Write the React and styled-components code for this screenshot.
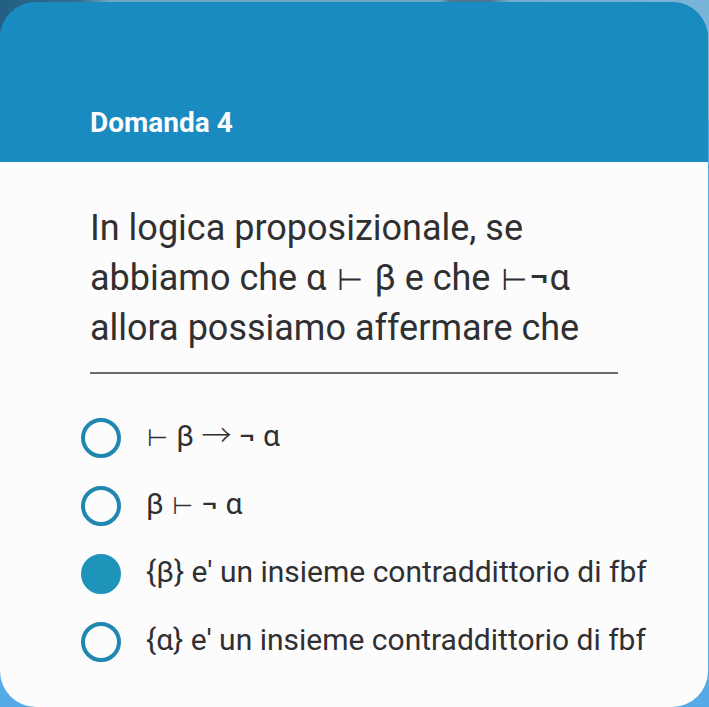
import React, { useState } from "react";
import styled, { createGlobalStyle } from "styled-components";

const Global = createGlobalStyle`
  * { box-sizing: border-box; }
  body {
    margin: 0;
    background:
      linear-gradient(to right, #235f82 0, #2f7093 80px, #70a9c6 110px, #70a9c6 440px, #4f7490 450px, #4f7490 490px, #70add0 510px, #78b5d8 100%) top / 100% 120px no-repeat,
      #55abe5;
    color: #303033;
    font-family: Roboto, "Noto Sans", "DejaVu Sans", sans-serif;
  }
`;

const Card = styled.main`
  display: flex;
  flex-direction: column;
  min-height: calc(100vh - 2px);
  margin: 2px 1px 0 0;
  border-radius: 36px;
  overflow: hidden;
  background: linear-gradient(#198bc1 80px, #fcfcfc 80px);
`;

const Header = styled.header`
  display: flex;
  align-items: flex-end;
  min-height: 160px;
  padding: 0 90px 22px;
  background: #198bc1;
  color: #fcfcfc;
`;

const Title = styled.h1`
  margin: 0;
  font-size: 28px;
  line-height: 34px;
  font-weight: 700;
`;

const Quiz = styled.form`
  padding: 41px 50px 28px 81px;
`;

const Question = styled.h2`
  margin: 0 40px 0 9px;
  padding-bottom: 19px;
  border-bottom: 2px solid #6c6c6e;
  font-size: 36px;
  line-height: 50px;
  font-weight: 400;
`;

const Line = styled.span`
  display: block;
  white-space: nowrap;
`;

const Options = styled.div`
  display: grid;
  gap: 28px;
  margin-top: 44px;
`;

const Option = styled.label`
  display: flex;
  align-items: flex-start;
  gap: 25px;
  height: 40px;
  font-size: 30px;
  line-height: 36px;
  white-space: nowrap;
`;

const Radio = styled.input`
  appearance: none;
  flex: none;
  width: 40px;
  height: 40px;
  margin: 0;
  border: 4px solid #2087b0;
  border-radius: 50%;
  &:checked { border-color: #1e94bb; background: #1e94bb; }
`;

const Turnstile = styled.span`
  padding: 0 ${({ $large }) => ($large ? "2px" : "1px")};
  font-size: ${({ $large }) => ($large ? "30px" : "24px")};
  line-height: 1;
`;

const Arrow = styled.span`
  font-family: "Noto Sans CJK JP", sans-serif;
  font-weight: 300;
  line-height: 1;
`;

const answers = [
  { id: "a", text: <><Turnstile>⊢</Turnstile> β <Arrow>→</Arrow> ¬ α</> },
  { id: "b", text: <>β <Turnstile>⊢</Turnstile> ¬ α</> },
  { id: "c", text: "{β} e' un insieme contraddittorio di fbf" },
  { id: "d", text: "{α} e' un insieme contraddittorio di fbf" },
];

export default function App() {
  const [selected, setSelected] = useState("c");
  return (
    <>
      <Global />
      <Card>
        <Header><Title>Domanda 4</Title></Header>
        <Quiz>
          <Question id="question">
            <Line>In logica proposizionale, se</Line>
            <Line>abbiamo che α <Turnstile $large>⊢</Turnstile> β e che <Turnstile $large>⊢</Turnstile>¬α</Line>
            <Line>allora possiamo affermare che</Line>
          </Question>
          <Options role="radiogroup" aria-labelledby="question">
            {answers.map(({ id, text }) => (
              <Option key={id}>
                <Radio type="radio" name="answer" value={id} checked={selected === id} onChange={() => setSelected(id)} />
                <span>{text}</span>
              </Option>
            ))}
          </Options>
        </Quiz>
      </Card>
    </>
  );
}
